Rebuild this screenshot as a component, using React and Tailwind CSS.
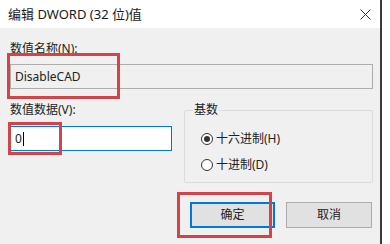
import React from "react";

const FONT = { fontFamily: '"Noto Sans", "Noto Sans CJK SC", sans-serif' };

const RedMark = ({ className }) => (
  <div className={`pointer-events-none absolute border-[3px] border-[#d2444a] ${className}`} />
);

const Radio = ({ checked, label }) => (
  <div className="flex items-center h-[16px]">
    <span className="flex h-[12px] w-[12px] items-center justify-center rounded-full border border-[#333] bg-white">
      {checked && <span className="h-[6px] w-[6px] rounded-full bg-[#333]" />}
    </span>
    <span className="ml-[3px] text-[12px] leading-[16px] text-[#222]">{label}</span>
  </div>
);

export default function App() {
  return (
    <div className="relative h-[244px] w-[390px] overflow-hidden bg-white" style={FONT}>
      <div className="flex h-[244px] w-[382px] flex-col border-r-2 border-[#3a3a3a] bg-[#f0f0f0]">
        {/* title bar */}
        <div className="flex h-[28px] shrink-0 items-center justify-between bg-white pl-[8px] pr-[9px]">
          <span className="text-[13px] leading-[16px] text-[#1a1a1a]">编辑 DWORD (32 位)值</span>
          <svg width="11" height="11" viewBox="0 0 11 11" className="text-[#333]">
            <path d="M0.5 0.5L10.5 10.5M10.5 0.5L0.5 10.5" stroke="currentColor" strokeWidth="1" />
          </svg>
        </div>

        <div className="flex flex-col pl-[10px] pt-[13px] text-[#222]">
          <div className="text-[12px] leading-[16px]">数值名称(N):</div>
          <div className="mt-[7px] flex h-[25px] w-[363px] items-center border border-[#adadad] bg-[#f0f0f0] px-[4px] text-[12px]">
            DisableCAD
          </div>

          <div className="mt-[13px] flex">
            <div className="flex w-[162px] flex-col">
              <div className="text-[12px] leading-[16px]">数值数据(V):</div>
              <div className="mt-[8px] flex h-[25px] items-center border border-[#0078d7] bg-white px-[4px] text-[12px]">
                0<span className="ml-[1px] h-[14px] w-px bg-black" />
              </div>
            </div>

            <div className="relative ml-[12px] mt-[8px] h-[73px] w-[189px] rounded-[2px] border border-[#dcdcdc]">
              <span className="absolute left-[8px] top-[-9px] bg-[#f0f0f0] px-px text-[12px] leading-[16px]">基数</span>
              <div className="flex flex-col gap-[10px] pl-[16px] pt-[20px]">
                <Radio checked label="十六进制(H)" />
                <Radio label="十进制(D)" />
              </div>
            </div>
          </div>

          <div className="ml-[180px] mt-[19px] flex gap-[11px]">
            <button className="flex h-[26px] w-[85px] items-center justify-center border-2 border-[#0078d7] bg-[#e1e1e1] text-[12px] text-[#222]">
              确定
            </button>
            <button className="flex h-[26px] w-[86px] items-center justify-center border border-[#adadad] bg-[#e1e1e1] text-[12px] text-[#222]">
              取消
            </button>
          </div>
        </div>
      </div>

      <RedMark className="left-[7px] top-[53px] h-[46px] w-[113px]" />
      <RedMark className="left-[8px] top-[122px] h-[33px] w-[54px]" />
      <RedMark className="left-[177px] top-[192px] h-[46px] w-[95px]" />
    </div>
  );
}
